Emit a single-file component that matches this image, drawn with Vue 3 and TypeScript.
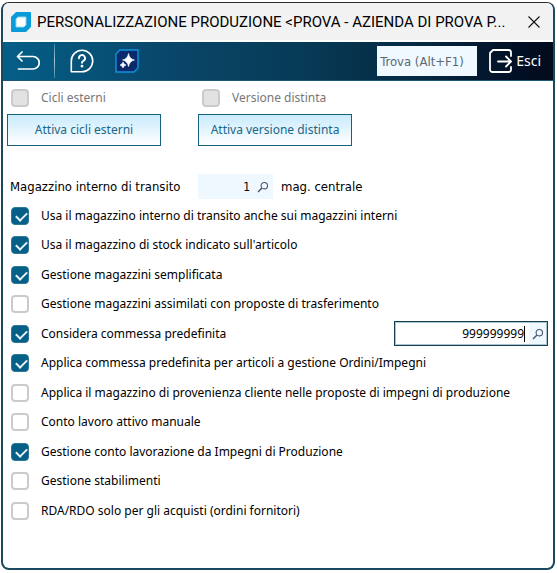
<script setup lang="ts">
import { ref } from 'vue'

interface Option {
  id: string
  label: string
  checked: boolean
  order?: boolean
}

const search = ref('')
const warehouse = ref('1')
const defaultOrder = ref('999999999')

const options = ref<Option[]>([
  { id: 'transito', label: 'Usa il magazzino interno di transito anche sui magazzini interni', checked: true },
  { id: 'stock', label: "Usa il magazzino di stock indicato sull'articolo", checked: true },
  { id: 'semplificata', label: 'Gestione magazzini semplificata', checked: true },
  { id: 'assimilati', label: 'Gestione magazzini assimilati con proposte di trasferimento', checked: false },
  { id: 'commessa', label: 'Considera commessa predefinita', checked: true, order: true },
  { id: 'applica', label: 'Applica commessa predefinita per articoli a gestione Ordini/Impegni', checked: true },
  { id: 'provenienza', label: 'Applica il magazzino di provenienza cliente nelle proposte di impegni di produzione', checked: false },
  { id: 'manuale', label: 'Conto lavoro attivo manuale', checked: false },
  { id: 'lavorazione', label: 'Gestione conto lavorazione da Impegni di Produzione', checked: true },
  { id: 'stabilimenti', label: 'Gestione stabilimenti', checked: false },
  { id: 'rda', label: 'RDA/RDO solo per gli acquisti (ordini fornitori)', checked: false },
])
</script>

<template>
  <main class="window">
    <header class="titlebar">
      <svg class="app-icon" viewBox="0 0 20 20" aria-hidden="true">
        <path d="M5 0H19Q20 0 20 1V15L15 20H1Q0 20 0 19V5Z" fill="#0b9bd9" />
        <path d="M7 5H15V13L13 15H5V7Z" fill="#fff" stroke="#8fd4f1" stroke-width="1" stroke-linejoin="round" />
      </svg>
      <h1 class="title">PERSONALIZZAZIONE PRODUZIONE &lt;PROVA - AZIENDA DI PROVA P...</h1>
      <button class="close" type="button" aria-label="Chiudi">
        <svg viewBox="0 0 12 12"><path d="M0.5 0.5L11.5 11.5M11.5 0.5L0.5 11.5" stroke="#111" stroke-width="1.1" /></svg>
      </button>
    </header>

    <nav class="toolbar">
      <button class="tool back" type="button" aria-label="Indietro">
        <svg viewBox="0 0 24 20" fill="none" stroke="#fff" stroke-width="1.7" stroke-linecap="round" stroke-linejoin="round">
          <path d="M6 1L1.5 5.5L6 10M1.5 5.5H17A6.200 6.200 0 0 1 17 18H2.500" />
        </svg>
      </button>
      <span class="divider"></span>
      <button class="tool help" type="button" aria-label="Aiuto">
        <svg viewBox="0 0 24 24" fill="none" stroke="#fff" stroke-width="1.6" stroke-linecap="round" stroke-linejoin="round">
          <path d="M1.3 22.7V12A10.7 10.7 0 1 1 12 22.7Z" />
          <path d="M9 9.300A3 3 0 1 1 13.500 11.700Q12 12.700 12 13.800" stroke-width="1.900" />
          <circle cx="12" cy="17.200" r="0.600" fill="#fff" />
        </svg>
      </button>
      <button class="tool spark" type="button" aria-label="Assistente">
        <svg viewBox="0 0 24 24">
          <path d="M5 1H23V19L19 23H1V5Z" fill="#0a2a6c" stroke="#1292dc" stroke-width="1.4" />
          <path d="M13.500 4.500Q14.500 10 19.500 11Q14.500 12 13.500 17.500Q12.500 12 7.500 11Q12.500 10 13.500 4.500Z" fill="#fff" stroke="#fff" stroke-width="0.6" />
          <path d="M8 13Q8.600 15.400 11 16Q8.600 16.600 8 19Q7.400 16.600 5 16Q7.400 15.400 8 13Z" fill="#fff" stroke="#fff" stroke-width="0.6" />
        </svg>
      </button>
      <input v-model="search" class="search" type="text" placeholder="Trova (Alt+F1)" aria-label="Trova (Alt+F1)" />
      <button class="tool exit" type="button">
        <svg viewBox="0 0 24 24" fill="none" stroke="#fff" stroke-width="1.8" stroke-linecap="round" stroke-linejoin="round">
          <path d="M22 7V3.500A2.500 2.500 0 0 0 19.500 1H4L1 4V20.500A2.500 2.500 0 0 0 3.500 23H19.500A2.500 2.500 0 0 0 22 20.500V18M9 12.500H21.500M17 7.500L22 12.500L17 17.500" />
        </svg>
        <span>Esci</span>
      </button>
    </nav>

    <section class="content">
      <div class="activations">
        <div class="activation">
          <label class="check disabled"><input type="checkbox" disabled /><span>Cicli esterni</span></label>
          <button class="action" type="button">Attiva cicli esterni</button>
        </div>
        <div class="activation">
          <label class="check disabled"><input type="checkbox" disabled /><span>Versione distinta</span></label>
          <button class="action" type="button">Attiva versione distinta</button>
        </div>
      </div>

      <div class="warehouse">
        <label class="warehouse-label" for="warehouse">Magazzino interno di transito</label>
        <div class="lookup">
          <input id="warehouse" v-model="warehouse" type="text" />
          <button class="lens" type="button" aria-label="Cerca magazzino">
            <svg viewBox="0 0 12 12" fill="none" stroke="#4a5270" stroke-width="1.1"><circle cx="7.300" cy="4.700" r="3.200" /><path d="M5 7L1 11" stroke-width="1.500" /></svg>
          </button>
        </div>
        <span>mag. centrale</span>
      </div>

      <div class="options">
        <div v-for="option in options" :key="option.id" class="option">
          <label class="check"><input v-model="option.checked" type="checkbox" /><span>{{ option.label }}</span></label>
          <div v-if="option.order" class="lookup focused">
            <input v-model="defaultOrder" type="text" aria-label="Commessa predefinita" />
            <span class="caret"></span>
            <button class="lens" type="button" aria-label="Cerca commessa">
              <svg viewBox="0 0 12 12" fill="none" stroke="#4a5270" stroke-width="1.1"><circle cx="7.300" cy="4.700" r="3.200" /><path d="M5 7L1 11" stroke-width="1.500" /></svg>
            </button>
          </div>
        </div>
      </div>
    </section>
  </main>
</template>

<style>
body {
  background: #fff;
}
</style>

<style scoped>
* {
  box-sizing: border-box;
}

.window {
  display: flex;
  flex-direction: column;
  min-height: calc(100vh - 5px);
  margin: 2px 2px 3px 1px;
  overflow: hidden;
  border: 2px solid #1b4a5e;
  border-top: 1px solid #2b2d30;
  border-radius: 8px;
  background: #fff;
  color: #000;
  font: 12px/16px "Noto Sans", sans-serif;
}

button,
input {
  margin: 0;
  padding: 0;
  border: 0;
  background: none;
  color: inherit;
  font: inherit;
}

svg {
  display: block;
  width: 100%;
  height: 100%;
}

.titlebar {
  display: flex;
  align-items: center;
  height: 37px;
  padding: 0 13px 0 8px;
  background: #f2f2f2;
}

.app-icon {
  flex: none;
  width: 20px;
  height: 20px;
}

.title {
  flex: 1;
  min-width: 0;
  margin: 0 0 0 6px;
  overflow: hidden;
  font: 400 15px/24px Roboto, "Noto Sans", sans-serif;
  white-space: nowrap;
}

.close {
  flex: none;
  width: 12px;
  height: 12px;
}

.toolbar {
  display: flex;
  align-items: center;
  height: 39px;
  margin-top: 2px;
  padding: 0 12px 0 13px;
  border-bottom: 1px solid #1b5875;
  background: linear-gradient(90deg, #045f87 0%, #09466a 30%, #073c58 52%, #062a43 75%, #020f24 94%, #020b1c 100%);
  color: #fff;
}

.tool {
  flex: none;
  height: 24px;
}

.back {
  width: 24px;
  height: 20px;
}

.divider {
  width: 1px;
  height: 34px;
  margin: 0 15px 0 14px;
  background: linear-gradient(#3d86a5, #a9c9d6, #3d86a5);
}

.help {
  width: 24px;
}

.spark {
  width: 24px;
  margin-left: 21px;
}

.search {
  width: 100px;
  height: 30px;
  margin-left: auto;
  padding: 0 3px;
  background: #f0f9ff;
  color: #4f5e6b;
  font-family: "DejaVu Sans Condensed", "DejaVu Sans", sans-serif;
  font-size: 13px;
}

.search::placeholder {
  color: #5b6874;
  opacity: 1;
}

.exit {
  display: flex;
  align-items: center;
  gap: 3px;
  margin-left: 12px;
  font-size: 14px;
}

.exit svg {
  width: 24px;
  height: 24px;
}

.content {
  padding: 8px 4px 12px;
}

.activations {
  display: flex;
  gap: 37px;
}

.activation {
  display: flex;
  flex-direction: column;
  gap: 7px;
  width: 154px;
}

.check {
  display: flex;
  align-items: center;
  gap: 12px;
  padding-left: 4px;
  white-space: nowrap;
}

.check input {
  flex: none;
  width: 18px;
  height: 18px;
  border: 2px solid #cbcbcb;
  border-radius: 4px;
  background: #fff;
  appearance: none;
}

.check input:checked {
  border: 1px solid #2d7896;
  background: #055f86;
}

.check input:checked::before {
  display: block;
  width: 9px;
  height: 5px;
  margin: 4px 0 0 4px;
  border: solid #e8f3f7;
  border-width: 0 0 2px 2px;
  content: "";
  transform: rotate(-45deg);
}

.check.disabled {
  color: #777;
}

.check.disabled input {
  background: #e2e2e2;
}

.action {
  height: 32px;
  border: 1px solid #17617f;
  background: linear-gradient(#c9ebfd, #fff);
  color: #1a6688;
}

.warehouse {
  display: flex;
  align-items: center;
  margin-top: 28px;
  padding-left: 3px;
  font-family: "DejaVu Sans Condensed", "DejaVu Sans", sans-serif;
  font-size: 13px;
}

.warehouse-label {
  width: 188px;
}

.lookup {
  display: flex;
  align-items: center;
  width: 75px;
  height: 25px;
  margin-right: 8px;
  padding-right: 4px;
  background: #f0f8ff;
  font-size: 12px;
}

.lookup input {
  flex: 1;
  min-width: 0;
  height: 100%;
  text-align: right;
}

.lens {
  flex: none;
  width: 12px;
  height: 12px;
  margin-left: 7px;
}

.options {
  display: grid;
  grid-auto-rows: 29px 30px;
  margin-top: 2px;
}

.option {
  display: flex;
  align-items: center;
  justify-content: space-between;
}

.lookup.focused {
  width: 154px;
  margin: 0 1px 0 0;
  padding-right: 3px;
  border: 1px solid #173f50;
  background: linear-gradient(90deg, #fff 134px, #f0f8ff 134px);
  box-shadow: inset 0 0 0 1px #a9c4d0;
}

.caret {
  width: 1px;
  height: 16px;
  background: #000;
}
</style>
